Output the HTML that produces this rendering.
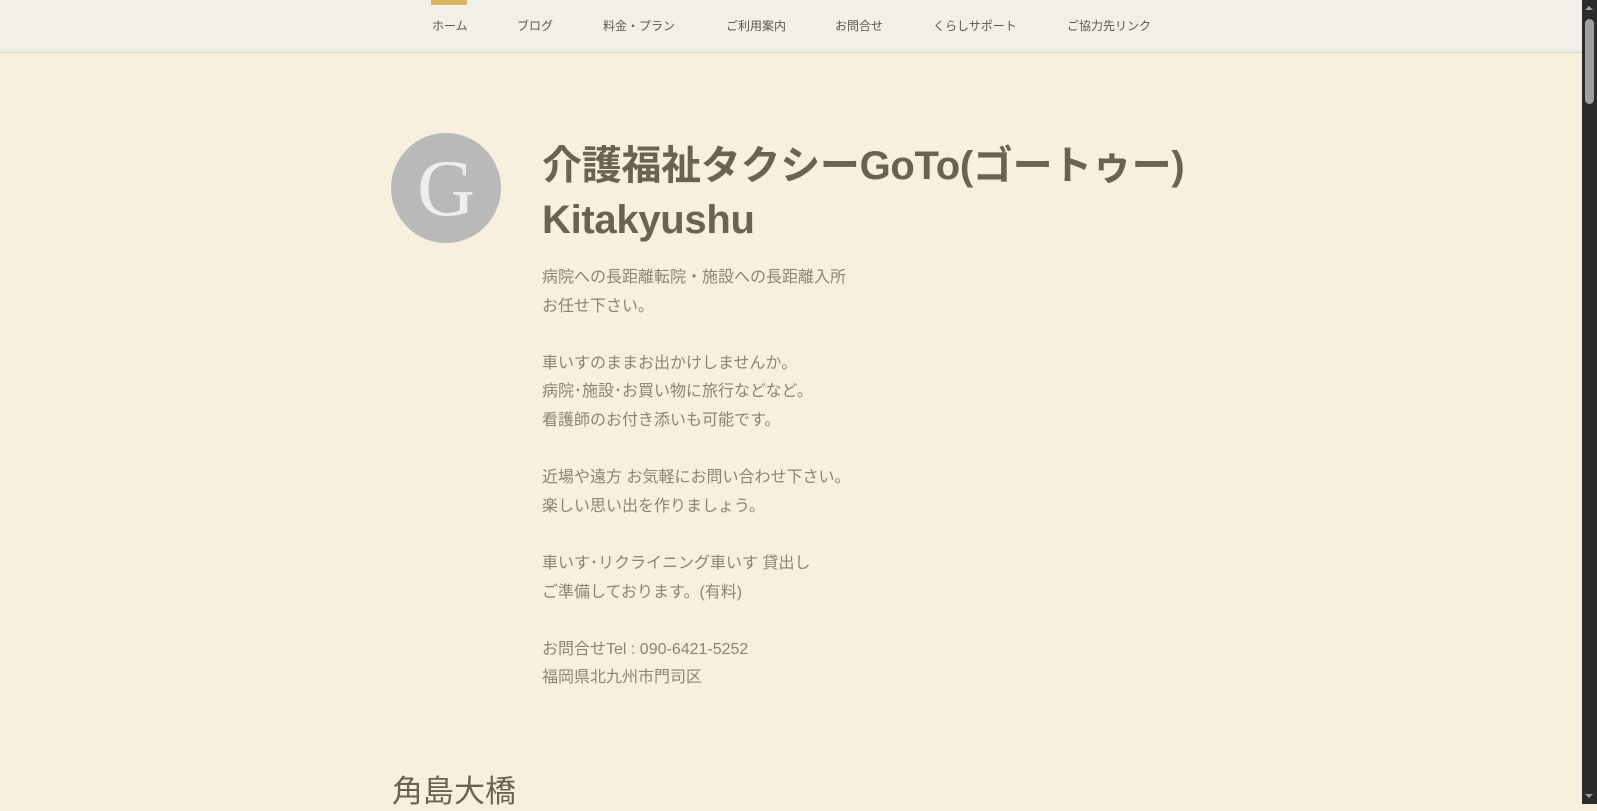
<!DOCTYPE html>
<html><head><meta charset="utf-8"><style>
html,body{margin:0;padding:0;}
body{width:1597px;height:804px;overflow:hidden;background:#f7f0df;font-family:"Liberation Sans","Noto Sans CJK JP",sans-serif;position:relative;}
.nav{position:absolute;left:0;top:0;width:1582px;height:52px;background:#f2efe8;border-bottom:1px solid #d8d2c4;}
.nav span{position:absolute;top:17px;font-size:12px;color:#5e5848;white-space:nowrap;}
.gold{position:absolute;left:431px;top:0;width:36px;height:5px;background:#dcb25e;}
.sb{position:absolute;left:1582px;top:0;width:15px;height:804px;background:#2b2b2b;}
.thumb{position:absolute;left:3px;top:19px;width:9px;height:85px;background:#a0a0a0;border-radius:5px;}
.up{position:absolute;left:3px;top:6px;width:0;height:0;border-left:4px solid transparent;border-right:4px solid transparent;border-bottom:4px solid #a0a0a0;}
.dn{position:absolute;left:3px;bottom:6px;width:0;height:0;border-left:4px solid transparent;border-right:4px solid transparent;border-top:4px solid #a0a0a0;}
.av{position:absolute;left:391px;top:133px;width:110px;height:110px;border-radius:50%;background:#b9b9b9;color:#eee;font-family:"Liberation Serif",serif;font-size:80px;line-height:112px;text-align:center;}
h1{position:absolute;left:542px;top:139px;margin:0;font-size:40px;line-height:54px;font-weight:bold;color:#6b6350;letter-spacing:-0.3px;}
.txt{position:absolute;left:542px;top:264px;font-size:16px;line-height:28.6px;color:#8d8471;}
h2{position:absolute;left:392px;top:766px;margin:0;font-size:31px;font-weight:normal;color:#6b6350;}
</style></head><body>
<div class="nav"><div class="gold"></div>
<span style="left:432px">ホーム</span>
<span style="left:517px">ブログ</span>
<span style="left:603px">料金・プラン</span>
<span style="left:726px">ご利用案内</span>
<span style="left:835px">お問合せ</span>
<span style="left:933px">くらしサポート</span>
<span style="left:1067px">ご協力先リンク</span>
</div>
<div class="sb"><div class="up"></div><div class="thumb"></div><div class="dn"></div></div>
<div class="av">G</div>
<h1>介護福祉タクシーGoTo(ゴートゥー)<br>Kitakyushu</h1>
<div class="txt">病院への長距離転院・施設への長距離入所<br>お任せ下さい。<br><br>車いすのままお出かけしませんか。<br>病院･施設･お買い物に旅行などなど。<br>看護師のお付き添いも可能です。<br><br>近場や遠方 お気軽にお問い合わせ下さい。<br>楽しい思い出を作りましょう。<br><br>車いす･リクライニング車いす 貸出し<br>ご準備しております。(有料)<br><br>お問合せTel : 090-6421-5252<br>福岡県北九州市門司区</div>
<h2>角島大橋</h2>
</body></html>
